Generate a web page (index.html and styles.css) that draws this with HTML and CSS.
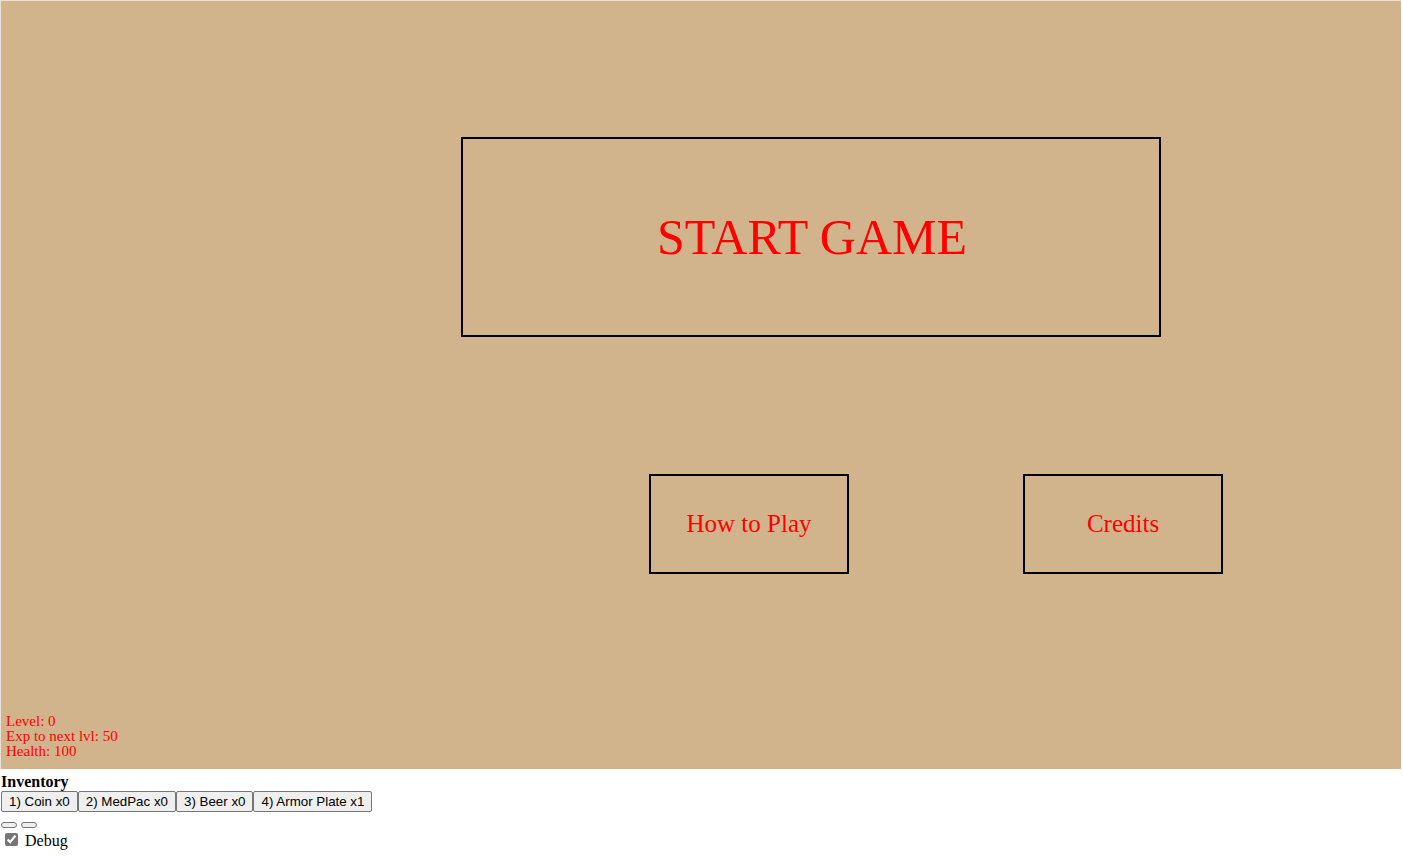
FILE: index.html
```html
<!DOCTYPE html>
<html>
<head>
<meta charset="utf-8">
<link rel="stylesheet" href="styles.css">
</head>
<body>
<div class="stage-line"><div class="stage">
  <div class="btn-box start-box"><span class="start-text">START GAME</span></div>
  <div class="btn-box small-box howto-box"><span class="small-text">How to Play</span></div>
  <div class="btn-box small-box credits-box"><span class="small-text">Credits</span></div>
  <div class="stats">
    <div class="stat">Level: 0</div>
    <div class="stat">Exp to next lvl: 50</div>
    <div class="stat">Health: 100</div>
  </div>
</div></div>
<div class="inv-title">Inventory</div>
<div class="inv-row"><button class="inv-btn">1) Coin x0</button><button class="inv-btn">2) MedPac x0</button><button class="inv-btn">3) Beer x0</button><button class="inv-btn">4) Armor Plate x1</button></div>
<div class="empty-row"><button class="empty-btn"></button> <button class="empty-btn"></button></div>
<div class="debug-row"><label class="debug-label"><input type="checkbox" class="debug-check" checked> Debug</label></div>
</body>
</html>
```

FILE: styles.css
```css
html, body {
  margin: 0;
  padding: 0;
  background: #ffffff;
  font-family: "Liberation Serif", "Times New Roman", serif;
  font-size: 16px;
}
.stage-line {
  line-height: normal;
}
.stage {
  display: inline-block;
  vertical-align: baseline;
  position: relative;
  width: 1400px;
  height: 768px;
  background: #d2b48c;
  border-top: 1px solid #e8e2da;
  border-left: 1px solid #e8e2da;
  border-right: 1px solid #ffffff;
  overflow: hidden;
}
.btn-box {
  position: absolute;
  box-sizing: border-box;
  border: 2px solid #000;
  display: flex;
  align-items: center;
  justify-content: center;
  color: #ff0000;
}
.start-box {
  left: 460px;
  top: 136px;
  width: 700px;
  height: 200px;
}
.start-text {
  font-size: 50px;
  line-height: 1;
  margin-top: -1px;
  margin-left: 2px;
}
.small-box {
  top: 473px;
  width: 200px;
  height: 100px;
}
.howto-box { left: 648px; }
.credits-box { left: 1022px; }
.small-text {
  font-size: 25px;
  line-height: 1;
  margin-top: -2px;
}
.stats {
  position: absolute;
  left: 5px;
  bottom: 10px;
  color: #ff0000;
  font-size: 15px;
  line-height: 15px;
}
.inv-title {
  font-weight: bold;
  padding-left: 1px;
}
.inv-row {
  font-size: 13.333px;
  padding-left: 1px;
}
.inv-btn {
  font-family: "Liberation Sans", Arial, sans-serif;
  font-size: 13.333px;
  margin: 0;
  padding: 1px 7px;
  border: 1px solid #767676;
  border-radius: 2px;
  background: #efefef;
  color: #000;
  height: 21px;
}
.empty-row {
  margin-top: 10px;
  line-height: 1;
  height: 8px;
  padding-left: 1px;
}
.empty-btn {
  margin: 0;
  padding: 1px 6px;
  border: 1px solid #767676;
  border-radius: 3px;
  background: #efefef;
  width: 16px;
  height: 6px;
  vertical-align: top;
  margin-right: 0;
}
.debug-row {
  margin-top: 0;
  padding-left: 1px;
}
.debug-check {
  margin: 3px 3px 3px 4px;
  accent-color: #767676;
}
```
